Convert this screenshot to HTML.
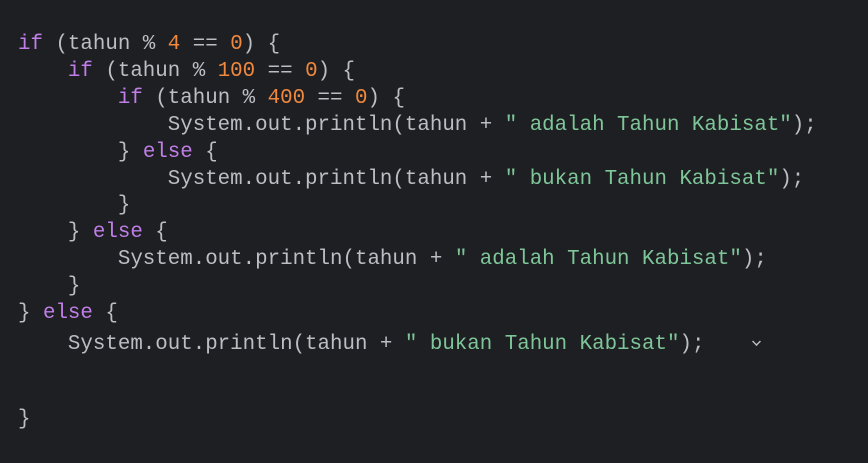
<!DOCTYPE html>
<html><head><meta charset="utf-8"><style>
html,body{margin:0;padding:0;background:#1e1f22;width:868px;height:463px;overflow:hidden}
.l{position:absolute;left:18px;font-family:"Liberation Mono",monospace;font-size:20.8px;color:#bcbec4;white-space:pre;line-height:27px}
.k{color:#c07ee8}.n{color:#f0883e}.s{color:#7ec699}
.chev{position:absolute;left:752px;top:337px;width:7px;height:7px;border-right:2px solid #bcbec4;border-bottom:2px solid #bcbec4;transform:rotate(45deg) scale(.7)}
</style></head><body>
<div class="l" style="top:31px"><span class="k">if</span> (tahun % <span class="n">4</span> == <span class="n">0</span>) {</div>
<div class="l" style="top:58px">    <span class="k">if</span> (tahun % <span class="n">100</span> == <span class="n">0</span>) {</div>
<div class="l" style="top:85px">        <span class="k">if</span> (tahun % <span class="n">400</span> == <span class="n">0</span>) {</div>
<div class="l" style="top:112px">            System.out.println(tahun + <span class="s">" adalah Tahun Kabisat"</span>);</div>
<div class="l" style="top:139px">        } <span class="k">else</span> {</div>
<div class="l" style="top:166px">            System.out.println(tahun + <span class="s">" bukan Tahun Kabisat"</span>);</div>
<div class="l" style="top:192px">        }</div>
<div class="l" style="top:219px">    } <span class="k">else</span> {</div>
<div class="l" style="top:246px">        System.out.println(tahun + <span class="s">" adalah Tahun Kabisat"</span>);</div>
<div class="l" style="top:273px">    }</div>
<div class="l" style="top:300px">} <span class="k">else</span> {</div>
<div class="l" style="top:331px">    System.out.println(tahun + <span class="s">" bukan Tahun Kabisat"</span>);</div>
<div class="chev"></div>
<div class="l" style="top:406px">}</div>
</body></html>
